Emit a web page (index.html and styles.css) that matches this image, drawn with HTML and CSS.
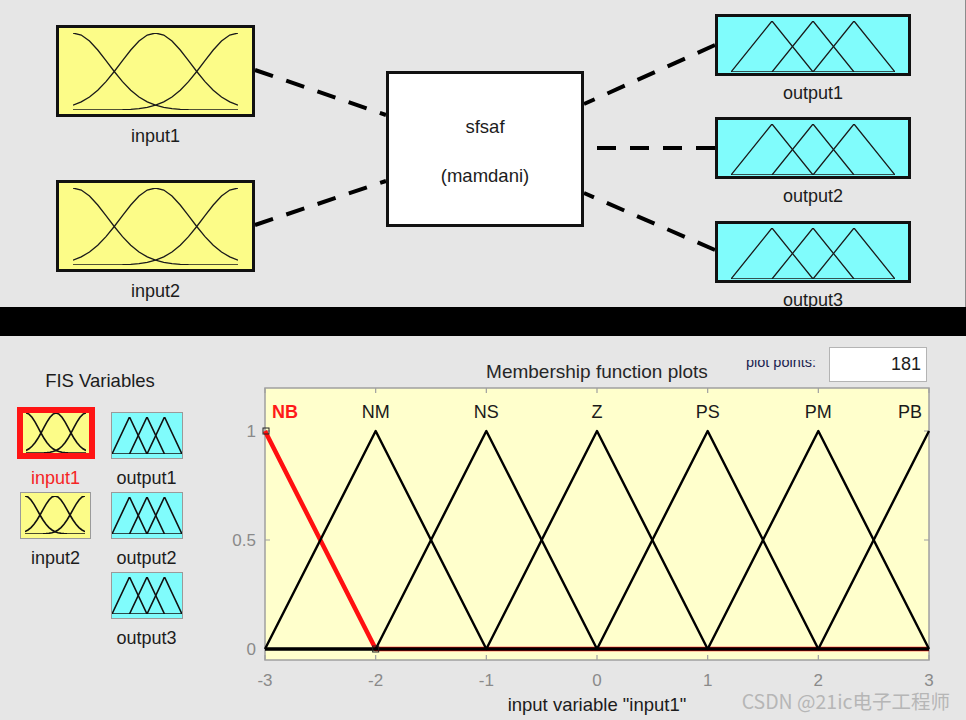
FILE: index.html
```html
<!DOCTYPE html>
<html lang="en">

<head>
    <meta charset="UTF-8">
    <meta name="viewport" content="width=device-width, initial-scale=1.0">
    <title>fuzzy logic designer</title>
    <link rel="stylesheet" href="styles.css">
</head>

<body>
    <!-- shared membership function shapes -->
    <svg class="sprite" aria-hidden="true">
        <symbol id="mf-gauss" viewBox="0 0 1000 100" preserveAspectRatio="none">
            <polyline vector-effect="non-scaling-stroke" points="0,0 50,2.7 100,10.5 150,22.1 200,35.8 250,50 300,63.2 350,74.3 400,83.1 450,89.4 500,93.8 550,96.5 600,98.2 650,99.1 700,99.6 800,99.9 900,100 1000,100"/>
            <polyline vector-effect="non-scaling-stroke" points="0,93.8 50,89.4 100,83.1 150,74.3 200,63.2 250,50 300,35.8 350,22.1 400,10.5 450,2.7 500,0 550,2.7 600,10.5 650,22.1 700,35.8 750,50 800,63.2 850,74.3 900,83.1 950,89.4 1000,93.8"/>
            <polyline vector-effect="non-scaling-stroke" points="0,100 100,100 200,99.9 300,99.6 350,99.1 400,98.2 450,96.5 500,93.8 550,89.4 600,83.1 650,74.3 700,63.2 750,50 800,35.8 850,22.1 900,10.5 950,2.7 1000,0"/>
        </symbol>
        <symbol id="mf-tri" viewBox="0 0 1000 100" preserveAspectRatio="none">
            <polyline vector-effect="non-scaling-stroke" points="0,100 250,0 500,100"/>
            <polyline vector-effect="non-scaling-stroke" points="250,100 500,0 750,100"/>
            <polyline vector-effect="non-scaling-stroke" points="500,100 750,0 1000,100"/>
            <polyline vector-effect="non-scaling-stroke" points="0,100 1000,100"/>
        </symbol>
    </svg>

    <div class="fis-canvas">
        <svg class="wires" width="966" height="307">
            <line x1="255" y1="70" x2="386" y2="115"/>
            <line x1="255" y1="225" x2="386" y2="181"/>
            <line x1="715" y1="45" x2="584" y2="104"/>
            <line x1="715" y1="148" x2="584" y2="148"/>
            <line x1="715" y1="250" x2="584" y2="193"/>
        </svg>

        <div class="node node-in in1">
            <div class="node-box"><svg class="mf-icon"><use href="#mf-gauss"/></svg></div>
            <div class="node-label">input1</div>
        </div>
        <div class="node node-in in2">
            <div class="node-box"><svg class="mf-icon"><use href="#mf-gauss"/></svg></div>
            <div class="node-label">input2</div>
        </div>

        <div class="node engine">
            <div>sfsaf</div>
            <div>(mamdani)</div>
        </div>

        <div class="node node-out out1">
            <div class="node-box"><svg class="mf-icon"><use href="#mf-tri"/></svg></div>
            <div class="node-label">output1</div>
        </div>
        <div class="node node-out out2">
            <div class="node-box"><svg class="mf-icon"><use href="#mf-tri"/></svg></div>
            <div class="node-label">output2</div>
        </div>
        <div class="node node-out out3">
            <div class="node-box"><svg class="mf-icon"><use href="#mf-tri"/></svg></div>
            <div class="node-label">output3</div>
        </div>
    </div>

    <div class="divider"></div>

    <div class="mf-editor">
        <div class="var-panel">
            <h4 class="var-title">FIS Variables</h4>
            <div class="var-grid">
                <div class="var var-in">
                    <div class="var-slot"><div class="var-icon selected"><svg class="mf-icon"><use href="#mf-gauss"/></svg></div></div>
                    <div class="var-name selected">input1</div>
                </div>
                <div class="var var-out">
                    <div class="var-slot"><div class="var-icon"><svg class="mf-icon"><use href="#mf-tri"/></svg></div></div>
                    <div class="var-name">output1</div>
                </div>
                <div class="var var-in">
                    <div class="var-slot"><div class="var-icon"><svg class="mf-icon"><use href="#mf-gauss"/></svg></div></div>
                    <div class="var-name">input2</div>
                </div>
                <div class="var var-out">
                    <div class="var-slot"><div class="var-icon"><svg class="mf-icon"><use href="#mf-tri"/></svg></div></div>
                    <div class="var-name">output2</div>
                </div>
                <div class="var var-out last">
                    <div class="var-slot"><div class="var-icon"><svg class="mf-icon"><use href="#mf-tri"/></svg></div></div>
                    <div class="var-name">output3</div>
                </div>
            </div>
        </div>

        <div class="plot-panel">
            <div class="plot-head">
                <h4 class="plot-title">Membership function plots</h4>
                <div class="points">
                    <div class="points-label"><span>plot points:</span></div>
                    <div class="points-box">181</div>
                </div>
            </div>

            <svg class="plot-chart" width="766" height="308" viewBox="200 384 766 308">
                <rect class="axes" x="265" y="388" width="664" height="272"/>
                <path class="ticks" d="M265 388v5M375.67 388v5M486.33 388v5M597 388v5M707.67 388v5M818.33 388v5M929 388v5
                    M265 660v-5M375.67 660v-5M486.33 660v-5M597 660v-5M707.67 660v-5M818.33 660v-5M929 660v-5
                    M265 431h5M265 540h5M265 649h5M929 431h-5M929 540h-5M929 649h-5"/>

                <g class="mf">
                    <polyline class="mf-sel" points="265,431 375.67,649 929,649"/>
                    <polyline points="265,649 375.67,431 486.33,649 929,649"/>
                    <polyline points="265,649 375.67,649 486.33,431 597,649 929,649"/>
                    <polyline points="265,649 486.33,649 597,431 707.67,649 929,649"/>
                    <polyline points="265,649 597,649 707.67,431 818.33,649 929,649"/>
                    <polyline points="265,649 707.67,649 818.33,431 929,649"/>
                    <polyline points="265,649 818.33,649 929,431"/>
                </g>
                <rect class="vertex" x="263" y="428" width="6" height="6"/>
                <rect class="vertex" x="372.67" y="646" width="6" height="6"/>

                <g class="mf-names">
                    <text class="sel" x="272" y="418">NB</text>
                    <text x="375.67" y="418">NM</text>
                    <text x="486.33" y="418">NS</text>
                    <text x="597" y="418">Z</text>
                    <text x="707.67" y="418">PS</text>
                    <text x="818.33" y="418">PM</text>
                    <text class="end" x="922" y="418">PB</text>
                </g>

                <g class="tick-labels y">
                    <text x="256" y="437">1</text>
                    <text x="256" y="546">0.5</text>
                    <text x="256" y="655">0</text>
                </g>
                <g class="tick-labels x">
                    <text x="265" y="686">-3</text>
                    <text x="375.67" y="686">-2</text>
                    <text x="486.33" y="686">-1</text>
                    <text x="597" y="686">0</text>
                    <text x="707.67" y="686">1</text>
                    <text x="818.33" y="686">2</text>
                    <text x="929" y="686">3</text>
                </g>
            </svg>

            <div class="plot-xlabel">input variable "input1"</div>
            <div class="watermark">CSDN @21ic电子工程师</div>
        </div>
    </div>
</body>

</html>
```

FILE: styles.css
```css
body {
    margin: 0;
    width: 966px;
    height: 720px;
    overflow: hidden;
    background-color: #e6e6e6;
    font-family: "Liberation Sans", Arial, sans-serif;
    color: #1c1c1c;
}
.sprite {
    position: absolute;
    width: 0;
    height: 0;
}
.mf-icon {
    display: block;
    width: 100%;
    height: 100%;
    fill: none;
    stroke: #1a1a1a;
    stroke-width: 1.3px;
}

/* top: FIS editor diagram */
.fis-canvas {
    position: relative;
    height: 307px;
    overflow: hidden;
    border-right: 1px solid #8c8c8c;
}
.wires {
    position: absolute;
    left: 0;
    top: 0;
}
.wires line {
    stroke: #000;
    stroke-width: 4;
    stroke-dasharray: 19 14;
}
.node {
    position: absolute;
    display: flex;
    flex-direction: column;
    align-items: center;
}
.node-box {
    box-sizing: border-box;
    border: 3px solid #111;
}
.node-in .node-box {
    width: 199px;
    height: 92px;
    padding: 5px 14px 4px;
    background-color: #fcfc88;
}
.node-out .node-box {
    width: 196px;
    height: 62px;
    padding: 4px 13px 1px;
    background-color: #80fcfc;
}
.node-label {
    margin-top: 9px;
    font-size: 18px;
    line-height: 20px;
}
.node-out .node-label {
    margin-top: 7px;
}
.in1 { left: 56px; top: 25px; }
.in2 { left: 56px; top: 180px; }
.out1 { left: 715px; top: 14px; }
.out2 { left: 715px; top: 117px; }
.out3 { left: 715px; top: 221px; }
.engine {
    left: 386px;
    top: 71px;
    width: 198px;
    height: 156px;
    box-sizing: border-box;
    border: 3px solid #111;
    background-color: #ffffff;
    justify-content: center;
    gap: 29px;
    padding-top: 4px;
    font-size: 18.5px;
    line-height: 20px;
}

.divider {
    height: 29px;
    background-color: #000;
}

/* bottom: membership function editor */
.mf-editor {
    display: flex;
    height: 384px;
}
.var-panel {
    width: 200px;
    flex: none;
    padding-top: 35px;
    box-sizing: border-box;
}
.var-title {
    margin: 0 0 16px;
    text-align: center;
    font-size: 18.5px;
    line-height: 20px;
    font-weight: normal;
}
.var-grid {
    display: grid;
    grid-template-columns: 91px 91px;
    padding-left: 10px;
}
.var {
    display: flex;
    flex-direction: column;
    align-items: center;
}
.var.last {
    grid-column: 2;
}
.var-slot {
    height: 52px;
    display: flex;
    align-items: flex-end;
}
.var-icon {
    box-sizing: border-box;
    width: 72px;
    height: 47px;
    border: 1px solid #9a9a9a;
}
.var-icon .mf-icon {
    stroke: #111;
    stroke-width: 1.6px;
}
.var-in .var-icon {
    width: 71px;
    padding: 3px 5px 4px 4px;
    background-color: #fcfc88;
}
.var-out .var-icon {
    padding: 4px 0;
    background-color: #80fcfc;
}
.var-in .var-icon.selected {
    width: 78px;
    height: 52px;
    border: 6px solid #ff1414;
    padding: 0 3px;
}
.var-name {
    margin-top: 10px;
    font-size: 18px;
    line-height: 18px;
}
.var-name.selected {
    color: #f52424;
}

.plot-panel {
    flex: 1;
    position: relative;
    display: flex;
    flex-direction: column;
}
.plot-head {
    display: flex;
    height: 48px;
}
.plot-title {
    width: 298px;
    margin: 25px 0 0 248px;
    text-align: center;
    font-size: 19px;
    line-height: 22px;
    font-weight: normal;
    color: #262626;
}
.points {
    display: flex;
    gap: 13px;
    margin: 11px 39px 0 auto;
}
/* the label is drawn half hidden, its top cut at the x-height */
.points-label {
    margin-top: 13px;
    height: 11px;
    overflow: hidden;
    font-size: 14.5px;
    line-height: 14px;
    color: #1b2350;
}
.points-label span {
    display: block;
    margin-top: -5.5px;
}
.points-box {
    box-sizing: border-box;
    width: 98px;
    height: 35px;
    padding-right: 5px;
    border: 1px solid #b4b4b4;
    background-color: #ffffff;
    text-align: right;
    font-size: 18px;
    line-height: 33px;
}
.plot-chart {
    display: block;
}
.axes {
    fill: #ffffcc;
    stroke: #a0a0a0;
    stroke-width: 1.5;
}
.ticks {
    fill: none;
    stroke: #a0a0a0;
    stroke-width: 1.2;
}
.mf polyline {
    fill: none;
    stroke: #000;
    stroke-width: 2.4;
    stroke-linejoin: round;
}
.mf .mf-sel {
    stroke: #ff1010;
    stroke-width: 4.5;
}
.vertex {
    fill: none;
    stroke: #222;
    stroke-width: 1;
}
.mf-names text {
    font-size: 18px;
    fill: #1a1a1a;
    text-anchor: middle;
}
.mf-names .sel {
    fill: #ff1a1a;
    font-weight: bold;
    text-anchor: start;
}
.mf-names .end {
    text-anchor: end;
}
.tick-labels text {
    font-size: 17px;
    fill: #8a8a8a;
}
.tick-labels.y text {
    text-anchor: end;
}
.tick-labels.x text {
    text-anchor: middle;
}
.plot-xlabel {
    margin: 2px 37px 0 65px;
    text-align: center;
    font-size: 18.5px;
    line-height: 22px;
}
.watermark {
    position: absolute;
    right: 16px;
    bottom: 10px;
    font-family: "Noto Sans CJK SC", sans-serif;
    font-size: 19.5px;
    line-height: 18px;
    color: #b6b6b6;
}
```
